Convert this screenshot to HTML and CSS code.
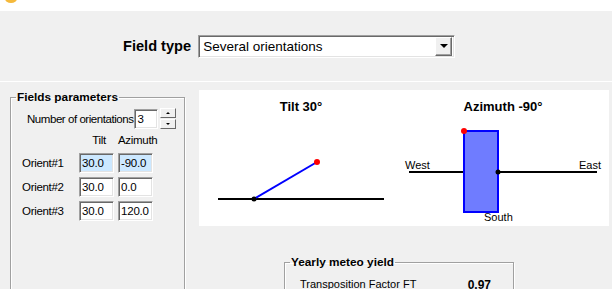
FILE: index.html
```html
<!DOCTYPE html>
<html>
<head>
<meta charset="utf-8">
<link rel="stylesheet" href="styles.css">
</head>
<body>
<div class="titlebar"><span class="appicon"></span></div>
<div class="header">
  <span class="ft-label">Field type</span>
  <div class="select">
    <span class="select-text">Several orientations</span>
    <span class="select-btn"><span class="tri"></span></span>
  </div>
</div>
<div class="main">
  <fieldset class="group params">
    <legend>Fields parameters</legend>
    <div class="inner">
      <div class="numrow">
        <span>Number of orientations</span>
        <span class="field num">3</span>
        <span class="spin">
          <span class="spinbtn"><span class="tri up"></span></span>
          <span class="spinbtn"><span class="tri small"></span></span>
        </span>
      </div>
      <div class="grid">
        <span></span><span class="colh">Tilt</span><span class="colh">Azimuth</span>
        <span class="rowl">Orient#1</span><span class="field sel">30.0</span><span class="field sel">-90.0</span>
        <span class="rowl">Orient#2</span><span class="field">30.0</span><span class="field">0.0</span>
        <span class="rowl">Orient#3</span><span class="field">30.0</span><span class="field">120.0</span>
      </div>
    </div>
  </fieldset>
  <div class="right">
    <div class="canvas">
      <svg width="410" height="136" viewBox="0 0 410 136">
        <text x="102" y="21" class="ttl" text-anchor="middle">Tilt 30°</text>
        <line x1="19" y1="109" x2="185" y2="109" stroke="#000" stroke-width="2"/>
        <line x1="55" y1="109" x2="118" y2="72" stroke="#0000ff" stroke-width="2"/>
        <circle cx="55" cy="109" r="2.5" fill="#000"/>
        <circle cx="118" cy="72" r="3" fill="#ff0000"/>
        <text x="304" y="21" class="ttl" text-anchor="middle">Azimuth -90°</text>
        <text x="206" y="79" class="lbl">West</text>
        <text x="402" y="79" class="lbl" text-anchor="end">East</text>
        <line x1="210" y1="82" x2="398" y2="82" stroke="#000" stroke-width="2"/>
        <rect x="265" y="41" width="34" height="81" fill="#6f7cff" stroke="#0000ff" stroke-width="2"/>
        <circle cx="265" cy="41" r="3" fill="#ff0000"/>
        <circle cx="299" cy="82" r="2.5" fill="#000"/>
        <text x="285" y="131" class="lbl">South</text>
      </svg>
    </div>
    <fieldset class="group yearly">
      <legend>Yearly meteo yield</legend>
      <div class="yrow"><span>Transposition Factor FT</span><b>0.97</b></div>
    </fieldset>
  </div>
</div>
</body>
</html>
```
FILE: styles.css
```css
* { box-sizing: border-box; }
html, body { margin: 0; padding: 0; }
body {
  width: 612px; height: 289px; overflow: hidden;
  background: #f0f0f0;
  font-family: "Liberation Sans", Arial, sans-serif;
  font-size: 11px; color: #000;
}
.titlebar { height: 11px; background: #fff; position: relative; }
.appicon {
  position: absolute; left: 5px; top: -6px; width: 12px; height: 9px;
  border-radius: 50%; background: #f5b93b;
}
.header {
  height: 71px; border-bottom: 1px solid #fff;
  display: flex; align-items: center; padding-left: 123px;
}
.ft-label { font-weight: bold; font-size: 14.6px; margin-right: 7px; }
.select {
  width: 257px; height: 23px; background: #fff;
  border-top: 1px solid #a0a0a0; border-left: 1px solid #a0a0a0;
  border-right: 1px solid #fff; border-bottom: 1px solid #fff;
  box-shadow: inset 1px 1px 0 #696969, inset -1px -1px 0 #e3e3e3;
  display: flex; align-items: center; justify-content: space-between;
  padding: 0 2px 0 4px;
}
.select-text { font-size: 13.5px; }
.select-btn {
  width: 17px; height: 19px; background: #f0f0f0;
  border-top: 1px solid #fff; border-left: 1px solid #fff;
  border-right: 1px solid #696969; border-bottom: 1px solid #696969;
  box-shadow: inset -1px -1px 0 #a0a0a0;
  display: flex; align-items: center; justify-content: center;
}
.tri {
  width: 0; height: 0;
  border-left: 4px solid transparent; border-right: 4px solid transparent;
  border-top: 4px solid #000;
}
.tri.small { border-left-width: 2.5px; border-right-width: 2.5px; border-top-width: 2px; }
.tri.up { border-top: 0; border-bottom: 2px solid #000; border-left: 2.5px solid transparent; border-right: 2.5px solid transparent; }
.main { display: flex; align-items: flex-start; }
.group {
  margin: 0; padding: 0;
  border: 1px solid #a0a0a0;
  box-shadow: 1px 1px 0 #fff, inset 1px 1px 0 #fff;
}
.group legend {
  font-weight: bold; font-size: 11.8px; padding: 0 1px; margin-left: 5px;
}
.params {
  margin-left: 10px; margin-top: 8px; width: 175px; height: 215px;
}
.inner { padding: 4px 0 0 10px; }
.numrow { display: flex; align-items: center; padding-left: 6px; letter-spacing: -0.45px; }
.numrow span:first-child { margin-right: 1px; font-size: 11.5px; }
.field {
  display: inline-flex; align-items: center;
  height: 20px; background: #fff; padding-left: 2px; font-size: 11.5px; letter-spacing: -0.2px;
  border-top: 1px solid #a0a0a0; border-left: 1px solid #a0a0a0;
  border-right: 1px solid #fff; border-bottom: 1px solid #fff;
  box-shadow: inset 1px 1px 0 #696969, inset -1px -1px 0 #e3e3e3;
}
.field.sel { background: #cce8ff; }
.num { width: 24px; }
.spin { display: flex; flex-direction: column; gap: 1px; margin-left: 2px; }
.spinbtn {
  width: 16px; height: 10px; background: #f0f0f0;
  border-top: 1px solid #fff; border-left: 1px solid #fff;
  border-right: 1px solid #696969; border-bottom: 1px solid #696969;
  display: flex; align-items: center; justify-content: center;
}
.grid {
  display: grid; grid-template-columns: 53px 35px 35px;
  column-gap: 4px; row-gap: 4px; margin-top: 5px; padding-left: 1px;
  letter-spacing: -0.3px; font-size: 11.5px;
}
.colh { text-align: center; padding-bottom: 3px; }
.colh:nth-child(2) { text-align: right; padding-right: 8px; }
.rowl { display: flex; align-items: center; }
.right { margin-left: 14px; margin-top: 8px; }
.canvas { width: 410px; height: 136px; background: #fff; }
.canvas svg { display: block; }
.ttl { font-family: "Liberation Sans", Arial, sans-serif; font-weight: bold; font-size: 13px; }
.lbl { font-family: "Liberation Sans", Arial, sans-serif; font-size: 11px; }
.yearly { margin-left: 85px; margin-top: 29px; width: 230px; height: 40px; }
.yrow { display: flex; justify-content: space-between; padding: 9px 22px 0 15px; }
.yrow b { font-size: 12px; }
```
